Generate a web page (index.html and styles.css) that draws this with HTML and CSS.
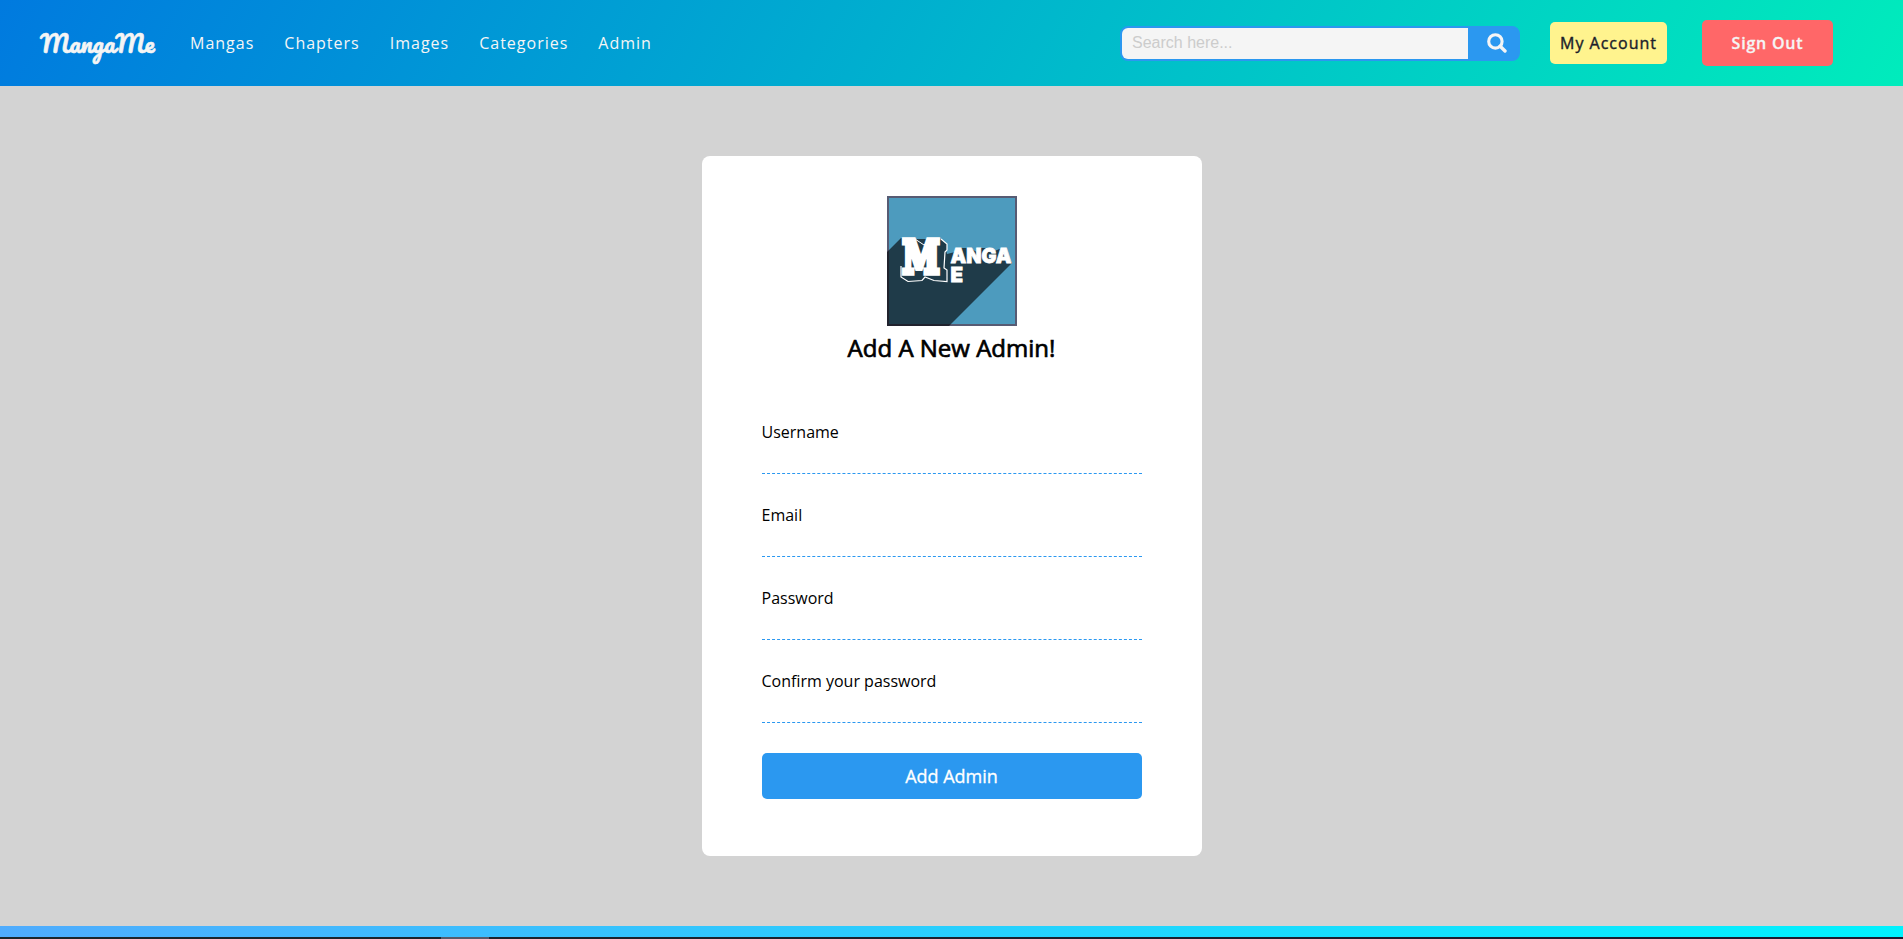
FILE: index.html
```html
<!DOCTYPE html>
<html lang="en">
<head>
<meta charset="utf-8">
<title>MangaMe</title>
<link rel="stylesheet" href="styles.css">
</head>
<body>
<header class="header">
  <a class="brand">MangaMe</a>
  <nav class="nav">
    <a>Mangas</a><a>Chapters</a><a>Images</a><a>Categories</a><a>Admin</a>
  </nav>
  <form class="search">
    <input class="search-input" type="text" placeholder="Search here...">
    <button class="search-button" type="button" aria-label="Search">
      <svg width="20" height="20" viewBox="0 0 20 20"><circle cx="8.4" cy="8.4" r="6.7" fill="none" stroke="#f5f5f5" stroke-width="3.1"/><path d="M13.2 13.2L18 18" stroke="#f5f5f5" stroke-width="3.4" stroke-linecap="round"/></svg>
    </button>
  </form>
  <a class="account">My Account</a>
  <a class="signout">Sign Out</a>
</header>
<main class="main">
  <section class="card">
    <svg class="logo" viewBox="0 0 130 130" role="img" aria-label="Manga Me">
      <rect width="130" height="130" fill="#4d9bbe"/>
      <path d="M0 56L14 42L38 46L57 46L60 58L68 56L72 52H82L90 56L93 52H99L105 56L115 52L125 67L62 130H0Z" fill="#1f3b49"/>
      <path d="M14 70V81L21 85.500L35 84.500L38 81L47 84.500L60 85.500V74L57 72L58 56L60 54V48L54 43" fill="#1f3b49" stroke="#fff" stroke-width="1.200"/>
      <path d="M28 43L37 49L44 43" fill="#1f3b49" stroke="#fff" stroke-width="1"/>
      <text class="logo-m" x="15.500" y="77" textLength="37" lengthAdjust="spacingAndGlyphs">M</text>
      <text class="logo-text"><tspan x="63.500" y="67" textLength="61" lengthAdjust="spacingAndGlyphs">ANGA</tspan><tspan x="63.500" y="85.500" textLength="12.500" lengthAdjust="spacingAndGlyphs">E</tspan></text>
      <rect x="1" y="1" width="128" height="128" fill="none" stroke="#575b73" stroke-width="2"/>
      <path d="M0 56L2 54V128H64L62 130H0Z" fill="#20222d"/>
    </svg>
    <h1 class="title">Add A New Admin!</h1>
    <form class="form">
      <label class="field">Username<input type="text"></label>
      <label class="field">Email<input type="email"></label>
      <label class="field">Password<input type="password"></label>
      <label class="field">Confirm your password<input type="password"></label>
      <button class="submit" type="button">Add Admin</button>
    </form>
  </section>
</main>
<footer class="footer"><div class="footer-body"><span class="footer-tab"></span></div></footer>
</body>
</html>
```
FILE: styles.css
```css
* { box-sizing: border-box; }
body {
  margin: 0;
  height: 939px;
  overflow: hidden;
  display: flex;
  flex-direction: column;
  background: #d3d3d3;
  font-family: "Open Sans", sans-serif;
  font-size: 16px;
  line-height: 22px;
}
.header {
  flex: none;
  height: 86px;
  display: flex;
  align-items: center;
  padding: 0 70px 0 40px;
  background: linear-gradient(120deg, #007adf 0%, #00ecbc 100%);
  color: #f5f5f5;
  letter-spacing: 1px;
}
.brand {
  width: 120px;
  font: 24px/42px "Pacifico", "Liberation Serif", serif;
  letter-spacing: 0;
  -webkit-text-stroke: .6px #f5f5f5;
}
.nav { display: flex; gap: 30px; margin-left: 30px; }
.search {
  display: flex;
  width: 400px;
  height: 35px;
  margin-left: auto;
  border: 2px solid #2b98f0;
  border-radius: 8px;
  background: #2b98f0;
}
.search-input {
  width: 346px;
  border: 0;
  padding: 0 0 1px 10px;
  border-radius: 6px 0 0 6px;
  background: #f5f5f5;
  font: 16px "Liberation Sans", Arial, sans-serif;
}
.search-input::placeholder { color: #ccc; }
.search-button {
  flex: 1;
  display: flex;
  align-items: center;
  justify-content: center;
  padding: 0 0 0 7px;
  border: 0;
  background: none;
}
.account {
  width: 117px;
  height: 42px;
  margin-left: 30px;
  border-radius: 5px;
  background: #fff38e;
  color: #1b1e2b;
  line-height: 42px;
  text-align: center;
  -webkit-text-stroke: .4px #1b1e2b;
}
.signout {
  width: 131px;
  height: 46px;
  margin-left: 35px;
  border-radius: 5px;
  background: #ff6768;
  font-weight: 600;
  letter-spacing: .8px;
  line-height: 46px;
  text-align: center;
  -webkit-text-stroke: .3px #f5f5f5;
}
.main { flex: 1; display: flex; justify-content: center; align-items: center; }
.card {
  width: 500px;
  height: 700px;
  padding: 40px 60px;
  border-radius: 8px;
  background: #fff;
  color: #000;
  display: flex;
  flex-direction: column;
}
.logo { width: 130px; height: 130px; align-self: center; }
.logo-m {
  font: bold 45px "DejaVu Serif", serif;
  fill: #fff;
  stroke: #fff;
  stroke-width: 5.5px;
}
.logo-text {
  font: 900 20px Inter, sans-serif;
  fill: #fff;
  stroke: #fff;
  stroke-width: .8px;
}
.title {
  margin: 5px 0 57px;
  font-size: 24px;
  line-height: 33px;
  font-weight: 400;
  text-align: center;
  -webkit-text-stroke: .7px #000;
}
.form { display: flex; flex-direction: column; gap: 30px; }
.field { display: flex; flex-direction: column; height: 53px; }
.field input { height: 31px; padding: 0; border: 0; border-bottom: 1px dashed #2b98f0; background: none; }
.submit {
  height: 46px;
  border: 0;
  border-radius: 5px;
  background: #2b98f0;
  color: #fff;
  font: 18px "Open Sans", sans-serif;
  -webkit-text-stroke: .3px #fff;
}
.footer { flex: none; height: 13px; padding-top: 11px; background: linear-gradient(to right, #4facfe 0%, #00f2fe 100%); }
.footer-body { height: 2px; padding-left: 441px; background: linear-gradient(to right, #1b262c, #1b1b2f); }
.footer-tab { display: block; width: 48px; height: 2px; background: #575b6b; }
```
